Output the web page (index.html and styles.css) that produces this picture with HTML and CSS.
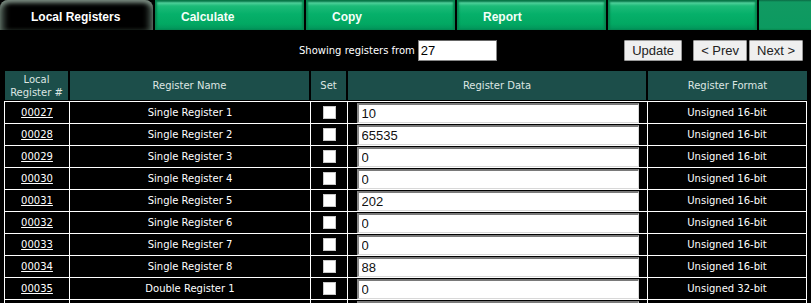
FILE: index.html
```html
<!DOCTYPE html>
<html>
<head>
<link rel="stylesheet" href="styles.css">
</head>
<body>
<div class="tabs">
  <div class="tab tab-active">Local Registers</div>
  <div class="tab">Calculate</div>
  <div class="tab">Copy</div>
  <div class="tab">Report</div>
  <div class="tab"></div>
  <div class="tab-fill"></div>
</div>

<form class="controls">
  <label for="start-reg" class="start-label">Showing registers from</label>
  <input type="text" id="start-reg" class="start-input" value="27" />
  <div class="nav-buttons">
    <button type="button" class="btn btn-update">Update</button>
    <button type="button" class="btn">&lt; Prev</button>
    <button type="button" class="btn">Next &gt;</button>
  </div>
</form>

<table class="registers">
  <colgroup>
    <col class="col-num">
    <col class="col-name">
    <col class="col-set">
    <col class="col-data">
    <col class="col-format">
  </colgroup>
  <thead>
    <tr>
      <th>Local<br />Register #</th>
      <th>Register Name</th>
      <th>Set</th>
      <th>Register Data</th>
      <th>Register Format</th>
    </tr>
  </thead>
  <tbody>
    <tr>
      <td><a href="#">00027</a></td>
      <td>Single Register 1</td>
      <td><input type="checkbox" class="set-box" /></td>
      <td><input type="text" class="data-input" value="10" /></td>
      <td>Unsigned 16-bit</td>
    </tr>
    <tr>
      <td><a href="#">00028</a></td>
      <td>Single Register 2</td>
      <td><input type="checkbox" class="set-box" /></td>
      <td><input type="text" class="data-input" value="65535" /></td>
      <td>Unsigned 16-bit</td>
    </tr>
    <tr>
      <td><a href="#">00029</a></td>
      <td>Single Register 3</td>
      <td><input type="checkbox" class="set-box" /></td>
      <td><input type="text" class="data-input" value="0" /></td>
      <td>Unsigned 16-bit</td>
    </tr>
    <tr>
      <td><a href="#">00030</a></td>
      <td>Single Register 4</td>
      <td><input type="checkbox" class="set-box" /></td>
      <td><input type="text" class="data-input" value="0" /></td>
      <td>Unsigned 16-bit</td>
    </tr>
    <tr>
      <td><a href="#">00031</a></td>
      <td>Single Register 5</td>
      <td><input type="checkbox" class="set-box" /></td>
      <td><input type="text" class="data-input" value="202" /></td>
      <td>Unsigned 16-bit</td>
    </tr>
    <tr>
      <td><a href="#">00032</a></td>
      <td>Single Register 6</td>
      <td><input type="checkbox" class="set-box" /></td>
      <td><input type="text" class="data-input" value="0" /></td>
      <td>Unsigned 16-bit</td>
    </tr>
    <tr>
      <td><a href="#">00033</a></td>
      <td>Single Register 7</td>
      <td><input type="checkbox" class="set-box" /></td>
      <td><input type="text" class="data-input" value="0" /></td>
      <td>Unsigned 16-bit</td>
    </tr>
    <tr>
      <td><a href="#">00034</a></td>
      <td>Single Register 8</td>
      <td><input type="checkbox" class="set-box" /></td>
      <td><input type="text" class="data-input" value="88" /></td>
      <td>Unsigned 16-bit</td>
    </tr>
    <tr>
      <td><a href="#">00035</a></td>
      <td>Double Register 1</td>
      <td><input type="checkbox" class="set-box" /></td>
      <td><input type="text" class="data-input" value="0" /></td>
      <td>Unsigned 32-bit</td>
    </tr>
    <tr>
      <td><a href="#">00037</a></td>
      <td>Double Register 2</td>
      <td><input type="checkbox" class="set-box" /></td>
      <td><input type="text" class="data-input" value="0" /></td>
      <td>Unsigned 32-bit</td>
    </tr>
  </tbody>
</table>
</body>
</html>
```

FILE: styles.css
```css
* {
  box-sizing: border-box;
}

body {
  margin: 0;
  background: #000;
  color: #fff;
  font-family: "DejaVu Sans", Verdana, sans-serif;
  font-size: 10px;
}

/* tab strip */
.tabs {
  display: flex;
  height: 30px;
  gap: 2px;
}

.tab {
  width: 149px;
  height: 30px;
  padding: 3px 0 0 26px;
  display: flex;
  align-items: center;
  font-family: "Liberation Sans", Arial, sans-serif;
  font-size: 12px;
  font-weight: bold;
  color: #f4fff8;
  background: linear-gradient(to bottom, #0b5e3c 0px, #0f7a4e 1px, #4ccf98 3px, #1cbb78 6px, #06b06a 14px, #02a862 24px, #03925a 30px);
  box-shadow: inset 2px 0 2px #07854f, inset -2px 0 2px #07854f;
}

.tab-active {
  width: 153px;
  padding-left: 31px;
  color: #fff;
  background: #000;
  border-radius: 8px 8px 0 0;
  box-shadow: inset 0 4px 4px -1px #7a8a80, inset 7px 0 6px -3px #4e5e54, inset -7px 0 6px -3px #4e5e54;
}

.tab-fill {
  flex: 1;
  background: linear-gradient(to bottom, #0b6a44 0px, #119a62 2px, #0c9a60 28px, #08874f 30px);
}

/* start register + paging */
.controls {
  display: flex;
  align-items: center;
  margin: 10px 0 0 0;
  padding: 0 8px 0 299px;
  height: 21px;
}

.start-label {
  margin-right: 3px;
}

.start-input {
  width: 79px;
  height: 21px;
  padding: 0 2px;
  font-family: "Liberation Sans", Arial, sans-serif;
  font-size: 13px;
  color: #000;
  background: #fff;
  border: 1px solid #888;
  border-top-color: #666;
}

.nav-buttons {
  display: flex;
  margin-left: auto;
  gap: 2px;
}

.btn {
  height: 21px;
  padding: 0 7px;
  font-family: "Liberation Sans", Arial, sans-serif;
  font-size: 13px;
  color: #222;
  background: #efefef;
  border: 1px solid #9a9a9a;
  border-radius: 1px;
}

.btn-update {
  width: 58px;
  margin-right: 9px;
}

/* register table */
.registers {
  width: 803px;
  margin: 10px 0 0 4px;
  border-collapse: separate;
  border-spacing: 0;
  table-layout: fixed;
  font-size: 10px;
}

.col-num { width: 66px; }
.col-name { width: 241px; }
.col-set { width: 37px; }
.col-data { width: 300px; }
.col-format { width: 159px; }

.registers th {
  height: 30px;
  padding: 0;
  background: #1c4e4a;
  color: #dde6e3;
  font-weight: normal;
  line-height: 13px;
  border-right: 2px solid #000;
  border-bottom: 1px solid #000;
}

.registers th:first-child {
  border-left: 1px solid #000;
}

.registers th:last-child {
  border-right: none;
}

.registers td {
  height: 22px;
  padding: 0;
  text-align: center;
  vertical-align: middle;
  border-right: 1px solid #fff;
  border-bottom: 1px solid #fff;
}

.registers td:first-child {
  border-left: 1px solid #fff;
}

.registers tbody tr:first-child td {
  border-top: 1px solid #fff;
  height: 23px;
}

.registers a {
  color: #fff;
}

.set-box {
  appearance: none;
  -webkit-appearance: none;
  display: block;
  width: 13px;
  height: 13px;
  margin: 0 auto;
  background: #fff;
  border: 1px solid #c8c8c8;
}

.data-input {
  display: block;
  width: 282px;
  height: 20px;
  margin: 0 auto;
  padding: 0 3px;
  font-family: "Liberation Sans", Arial, sans-serif;
  font-size: 13px;
  color: #111;
  background: #fff;
  border: 1px solid #d8d8d8;
  border-top: 2px solid #7a7a7a;
  border-left: 2px solid #8a8a8a;
}
```
